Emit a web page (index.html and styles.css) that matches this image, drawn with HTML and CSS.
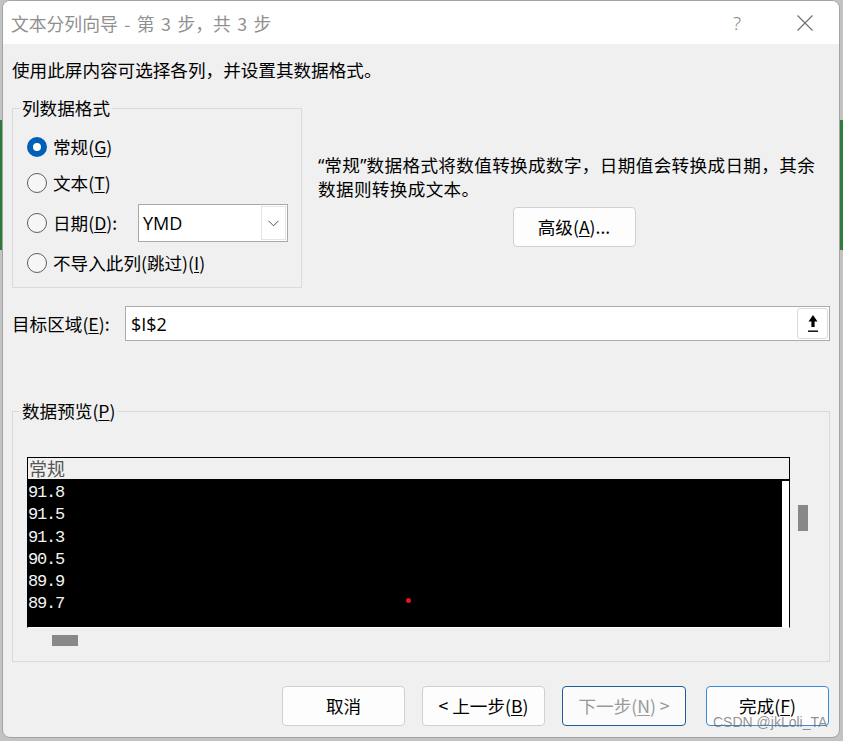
FILE: index.html
```html
<!DOCTYPE html>
<html lang="zh-CN">
<head>
<meta charset="utf-8">
<title>文本分列向导</title>
<link rel="stylesheet" href="styles.css">
</head>
<body>
<div class="dialog">
  <div class="titlebar">
    <span class="title">文本分列向导 - 第 3 步，共 3 步</span>
    <span class="help">?</span>
    <svg class="close" width="16" height="16" viewBox="0 0 16 16"><path d="M0.5 0.5L15.5 15.5M15.5 0.5L0.5 15.5" stroke="#6e6e6e" stroke-width="1.1" fill="none"/></svg>
  </div>
  <div class="content">
    <p class="intro">使用此屏内容可选择各列，并设置其数据格式。</p>
    <div class="top">
      <fieldset class="group format">
        <legend>列数据格式</legend>
        <div class="options">
          <div class="opt"><span class="radio checked"></span><span>常规(<u>G</u>)</span></div>
          <div class="opt"><span class="radio"></span><span>文本(<u>T</u>)</span></div>
          <div class="opt date">
            <span class="radio"></span><span class="date-label">日期(<u>D</u>):</span>
            <div class="select"><span>YMD</span><span class="select-btn"><svg width="11" height="7" viewBox="0 0 11 7"><path d="M0.5 0.8L5.5 5.8L10.5 0.8" stroke="#555" stroke-width="1" fill="none"/></svg></span></div>
          </div>
          <div class="opt"><span class="radio"></span><span>不导入此列(跳过)(<u>I</u>)</span></div>
        </div>
      </fieldset>
      <div class="info">
        <p class="desc"><span class="q">“</span>常规<span class="q">”</span>数据格式将数值转换成数字，日期值会转换成日期，其余<br>数据则转换成文本。</p>
        <button class="btn adv">高级(<u>A</u>)...</button>
      </div>
    </div>
    <div class="target">
      <span class="target-label">目标区域(<u>E</u>):</span>
      <div class="input"><span>$I$2</span><span class="pick"><svg width="12" height="18" viewBox="0 0 12 18"><path d="M6 0L10.5 6.5H7.6V12H4.4V6.5H1.5Z" fill="#000"/><rect x="1" y="15.5" width="10" height="1.4" fill="#000"/></svg></span></div>
    </div>
    <fieldset class="group preview">
      <legend>数据预览(<u>P</u>)</legend>
      <div class="pv-row">
        <div class="grid">
          <div class="grid-head">常规</div>
          <div class="grid-body">
            <div class="cells">
              <div>91.8</div>
              <div>91.5</div>
              <div>91.3</div>
              <div>90.5</div>
              <div>89.9</div>
              <div>89.7</div>
              <span class="dot"></span>
            </div>
            <div class="strip"></div>
          </div>
        </div>
        <div class="vscroll"><span class="thumb"></span></div>
      </div>
      <div class="hscroll"><span class="thumb hthumb"></span></div>
    </fieldset>
    <div class="buttons">
      <button class="btn">取消</button>
      <button class="btn">&lt; 上一步(<u>B</u>)</button>
      <button class="btn next">下一步(<u>N</u>) &gt;</button>
      <button class="btn finish">完成(<u>F</u>)</button>
    </div>
  </div>
  <span class="watermark">CSDN @jkLoli_TA</span>
</div>
</body>
</html>
```
FILE: styles.css
```css
html, body {
  margin: 0;
}

body {
  width: 843px;
  height: 741px;
  overflow: hidden;
  background-color: #c3c3c3;
  background-image:
    linear-gradient(#c3c3c3 120px, #2f7b3a 120px, #2f7b3a 250px, #c3c3c3 250px),
    linear-gradient(#c3c3c3 120px, #2f7b3a 120px, #2f7b3a 250px, #c3c3c3 250px);
  background-size: 2px 100%, 3px 100%;
  background-position: left top, right top;
  background-repeat: no-repeat;
  font-family: "Noto Sans CJK SC", sans-serif;
  color: #000;
}

.dialog {
  box-sizing: border-box;
  width: 838px;
  height: 738px;
  margin-left: 2px;
  border: 1px solid #a3a3a3;
  border-radius: 8px;
  background: #f0f0f0;
  overflow: hidden;
  position: relative;
  display: flex;
  flex-direction: column;
  font-size: 17.6px;
  line-height: 24px;
}

u {
  text-decoration: underline;
  text-underline-offset: 2px;
  text-decoration-thickness: 1px;
}

.titlebar {
  flex: none;
  height: 43px;
  background: #fff;
  display: flex;
  align-items: center;
}

.title {
  margin-left: 8px;
  font-size: 17.8px;
  word-spacing: 2.5px;
  color: #8f8f8f;
  white-space: nowrap;
}

.help {
  margin-left: auto;
  width: 20px;
  text-align: center;
  font-family: "Noto Sans", sans-serif;
  font-weight: 300;
  font-size: 19px;
  color: #8a8a8a;
}

.close {
  display: block;
  flex: none;
  margin-left: 50px;
  margin-right: 26px;
}

.content {
  flex: 1;
  padding: 0 9px;
}

.intro {
  margin: 14px 0 0;
  white-space: nowrap;
}

.top {
  display: flex;
  align-items: flex-start;
  margin-top: 14px;
}

.group {
  margin: 0;
  min-width: 0;
  border: 1px solid #dadada;
}

.group legend {
  margin-left: 7px;
  padding: 0 2px;
  line-height: 24px;
}

.format {
  box-sizing: border-box;
  width: 290px;
  flex: none;
  padding: 12px 0 9px 0;
}

.options {
  display: flex;
  flex-direction: column;
  gap: 6px;
}

.opt {
  display: flex;
  align-items: center;
  height: 30px;
  padding-left: 14px;
  white-space: nowrap;
}

.opt.date {
  height: 38px;
}

.radio {
  box-sizing: border-box;
  flex: none;
  width: 20px;
  height: 20px;
  border-radius: 50%;
  border: 1px solid #5e5e5e;
  background: #f6f6f6;
  margin-right: 6px;
}

.radio.checked {
  border: 6px solid #005fb8;
  background: #fff;
}

.date-label {
  width: 85px;
  flex: none;
}

.select {
  box-sizing: border-box;
  width: 150px;
  height: 38px;
  border: 1px solid #a9a9a9;
  background: #fff;
  display: flex;
  align-items: center;
  padding-left: 4px;
  font-family: "Open Sans", "Noto Sans", sans-serif;
  font-size: 18px;
}

.select-btn {
  box-sizing: border-box;
  margin-left: auto;
  margin-right: 1px;
  width: 25px;
  height: 34px;
  border: 1px solid #e4e4e4;
  background: #fff;
  display: flex;
  align-items: center;
  justify-content: center;
}

.info {
  flex: 1;
  margin-left: 16px;
  padding-top: 57px;
  display: flex;
  flex-direction: column;
  align-items: center;
}

.desc {
  align-self: stretch;
  margin: 0;
  white-space: nowrap;
  letter-spacing: 0.35px;
}

.q {
  font-family: "Noto Sans", sans-serif;
  letter-spacing: 0;
}

.btn {
  box-sizing: border-box;
  width: 123px;
  height: 40px;
  border: 1px solid #d0d0d0;
  border-radius: 4px;
  background: #fdfdfd;
  font: inherit;
  color: #000;
  padding: 0;
  white-space: nowrap;
}

.adv {
  margin-top: 6px;
}

.target {
  display: flex;
  align-items: center;
  margin-top: 18px;
}

.target-label {
  width: 113px;
  flex: none;
  white-space: nowrap;
}

.input {
  flex: 1;
  box-sizing: border-box;
  height: 35px;
  border: 1px solid #ababab;
  background: #fff;
  display: flex;
  align-items: center;
  padding: 0 1px 0 5px;
  font-family: "Open Sans", "Noto Sans", sans-serif;
  font-size: 18px;
}

.pick {
  box-sizing: border-box;
  margin-left: auto;
  width: 31px;
  height: 31px;
  border: 1px solid #d9d9d9;
  border-radius: 3px;
  background: #fff;
  display: flex;
  align-items: center;
  justify-content: center;
}

.pick svg {
  display: block;
}

.preview {
  margin-top: 58px;
  padding: 34px 0 15px 14px;
}

.preview legend {
  margin-left: -7px;
}

.pv-row {
  display: flex;
  align-items: flex-start;
}

.grid {
  box-sizing: border-box;
  width: 763px;
  flex: none;
  border: 1px solid #000;
  border-bottom: 1px solid #fff;
}

.grid-head {
  height: 21px;
  line-height: 21px;
  border-bottom: 2px solid #000;
  background: #f0f0f0;
  padding-left: 1px;
  font-size: 18px;
  color: #555;
}

.grid-body {
  display: flex;
  height: 146px;
}

.cells {
  flex: 1;
  position: relative;
  background: #000;
  color: #f4f4f4;
  padding-top: 1px;
  font-family: "Liberation Mono", monospace;
  font-size: 17px;
  letter-spacing: -1.2px;
  line-height: 22.3px;
}

.strip {
  width: 7px;
  background: #fff;
}

.dot {
  position: absolute;
  left: 378px;
  top: 117px;
  width: 5px;
  height: 5px;
  border-radius: 50%;
  background: #e4141b;
}

.vscroll {
  padding: 48px 0 0 8px;
}

.thumb {
  display: block;
  width: 10px;
  height: 26px;
  background: #888;
}

.hscroll {
  padding: 7px 0 0 25px;
}

.hthumb {
  width: 26px;
  height: 11px;
}

.buttons {
  display: flex;
  justify-content: flex-end;
  margin-top: 24px;
  padding-right: 1px;
}

.buttons .btn + .btn {
  margin-left: 17px;
}

.buttons .next {
  width: 124px;
  border-color: #1d5e9c;
  color: #9a9a9a;
  background: #fbfbfb;
}

.buttons .btn.finish {
  margin-left: 20px;
  border-color: #3c8ad6;
}

.watermark {
  position: absolute;
  left: 710px;
  top: 712px;
  font-family: "Liberation Sans", sans-serif;
  font-size: 14px;
  line-height: 18px;
  color: rgba(110, 110, 110, 0.75);
  white-space: nowrap;
}
```
